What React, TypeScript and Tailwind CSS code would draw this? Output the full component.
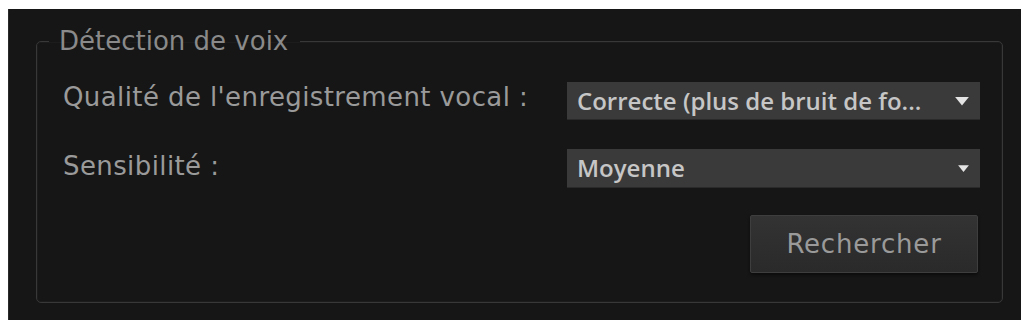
const labelFont = { fontFamily: '"DejaVu Sans", sans-serif' };

function Caret({ size = 14 }: { size?: number }) {
  return (
    <svg width={size} height={Math.round(size * 0.72)} viewBox="0 0 14 10" className="shrink-0">
      <path d="M1 1.5 L13 1.5 L7 9 Z" fill="#e4e4e4" />
    </svg>
  );
}

interface SelectProps {
  value: string;
  caret?: number;
  height: string;
}

function FakeSelect({ value, caret, height }: SelectProps) {
  return (
    <div
      className={`w-[413px] ${height} bg-[#3a3a3a] flex items-center justify-between pl-[10px] pr-[10px] shadow-[0_1px_0_#2a2a2a]`}
    >
      <span
        className="whitespace-nowrap text-[24px] font-semibold text-[#c6c6c6] leading-none"
        style={{ fontFamily: '"Open Sans", sans-serif' }}
      >
        {value}
      </span>
      <Caret size={caret} />
    </div>
  );
}

export default function App() {
  return (
    <div className="w-[1026px] h-[320px] bg-white pt-[9px] pl-[8px] pr-[5px] overflow-hidden">
      <div className="h-[311px] bg-[#161616] border-l border-[#2a2a2a] flex flex-col">
        <fieldset className="ml-[27px] mr-[18px] mt-[17px] h-[277px] border border-[#383838] rounded-[5px] shadow-[inset_0_0_0_1px_#1c1c1c]">
          <legend
            className="ml-[12px] pl-[10px] pr-[12px] text-[26px] leading-[30px] text-[#8a8a8a]"
            style={labelFont}
          >
            Détection de voix
          </legend>

          <div className="flex flex-col pl-[26px] pr-[22px] pt-[26px]">
            <div className="flex items-center justify-between">
              <span
                className="pb-[8px] text-[26px] leading-none tracking-[0.4px] text-[#9a9a9a]"
                style={labelFont}
              >
                Qualité de l'enregistrement vocal :
              </span>
              <FakeSelect value="Correcte (plus de bruit de fo..." caret={16} height="h-[37px]" />
            </div>

            <div className="flex items-center justify-between mt-[30px]">
              <span
                className="pb-[5px] text-[26px] leading-none tracking-[0.4px] text-[#9a9a9a]"
                style={labelFont}
              >
                Sensibilité :
              </span>
              <FakeSelect value="Moyenne" caret={13} height="h-[38px]" />
            </div>

            <div className="flex justify-end mt-[28px] pr-[2px]">
              <button
                className="w-[228px] h-[58px] bg-gradient-to-b from-[#333333] to-[#2a2a2a] border border-[#3e3e3e] rounded-[2px] text-[26px] tracking-[0.8px] text-[#9a9a9a] shadow-[0_2px_3px_#0c0c0c]"
                style={labelFont}
              >
                Rechercher
              </button>
            </div>
          </div>
        </fieldset>
      </div>
    </div>
  );
}
